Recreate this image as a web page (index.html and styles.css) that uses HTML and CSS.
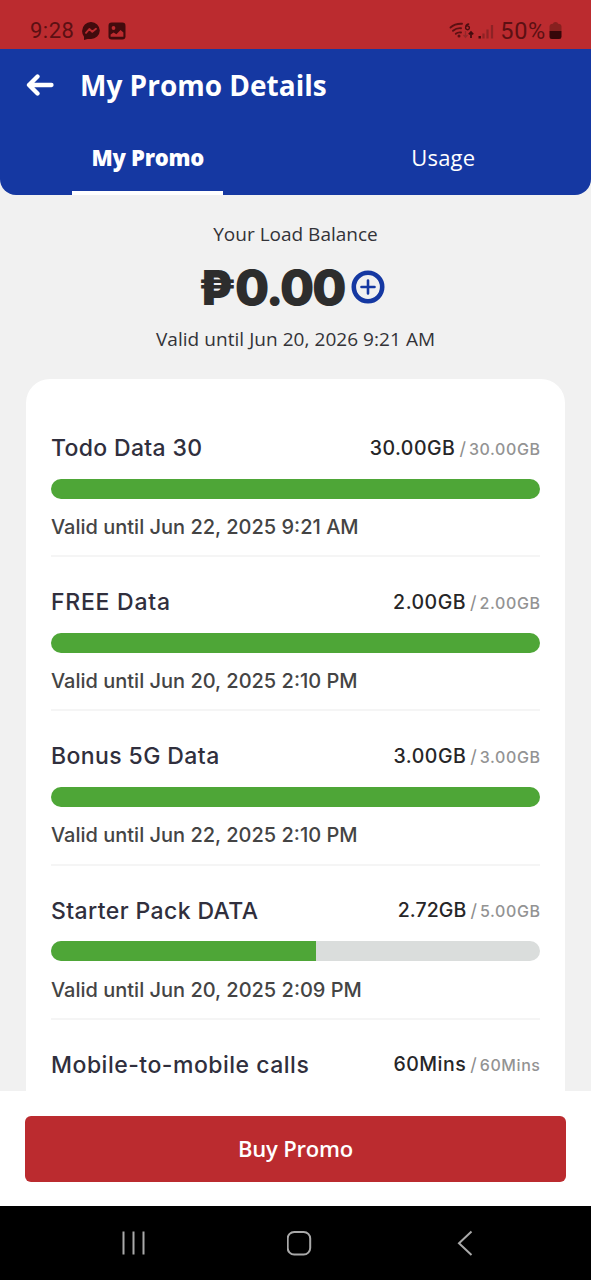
FILE: index.html
```html
<!DOCTYPE html>
<html lang="en">
<head>
<meta charset="utf-8">
<title>My Promo Details</title>
<link rel="stylesheet" href="styles.css">
</head>
<body>
<div class="screen">
  <div class="status">
    <span class="clock">9:28</span>
    <svg class="messenger" width="18" height="18" viewBox="0 0 18 18"><path d="M9 0a8.700 8.700 0 0 1 8.800 8.500A8.700 8.700 0 0 1 9 17H5.500L2 18v-3.300A8.300 8.300 0 0 1 .2 8.500 8.700 8.700 0 0 1 9 0z" fill="#420b0d"/><path d="M4 10.800 7.300 7l3 2.800L14 6.800" fill="none" stroke="#bb2b2f" stroke-width="1.900" stroke-linejoin="round" stroke-linecap="round"/></svg>
    <svg class="gallery" width="18" height="18" viewBox="0 0 18 18"><rect x=".5" y=".5" width="17" height="17" rx="3.200" fill="#420b0d"/><circle cx="5.500" cy="6" r="1.900" fill="#bb2b2f"/><path d="M2.600 14.800v-2.300l3-2 2.800 1.700 4.200-4.300 2.800 2.700v4.200z" fill="#bb2b2f"/></svg>
    <div class="signals">
      <svg width="46" height="20" viewBox="0 0 46 20"><g fill="none" stroke="#5c1013" stroke-width="1.900" stroke-linecap="round"><path d="M1.500 6.500Q6 2.500 13 2.800M4 9.800Q7.500 6.800 12 7.200M6.800 12.800Q9 11 12 11.500"/></g><circle cx="10" cy="15" r="1.500" fill="#5c1013"/><path d="M20.200 3q-3.600.2-3.600 3.700a1.900 1.900 0 1 0 1.900-1.800q-1.300 0-1.900 1.200" fill="none" stroke="#4b0d10" stroke-width="1.400"/><path d="M16.500 10v6M14.500 14l2 2.300 2-2.300" fill="none" stroke="#94272a" stroke-width="1.300"/><path d="M22 17v-5.500M19.800 13.400 22 11l2.200 2.400" fill="none" stroke="#420b0d" stroke-width="1.700"/><path d="M29.500 15h2.400v2.500h-2.400z" fill="#420b0d"/><path d="M34.500 12.500v5M38.500 8.500v9M43 4v13.500" stroke="#8d2225" stroke-width="2.200"/></svg>
      <span class="percent">50%</span>
      <svg class="battery" width="13" height="18" viewBox="0 0 13 18"><path d="M4 1.800Q4 0 6.500 0T9 1.800q3.500 0 3.500 3V9H.5V4.800q0-3 3.500-3z" fill="#87201f"/><path d="M.5 9h12v5.700q0 2.300-2.300 2.300H2.800Q.5 17 .5 14.700z" fill="#360709"/></svg>
    </div>
  </div>

  <header class="header">
    <div class="title-row">
      <svg class="back" width="28" height="22" viewBox="0 0 28 22"><path d="M25.500 11H3M11.500 2.500 3 11l8.500 8.500" fill="none" stroke="#fff" stroke-width="4.300" stroke-linecap="round" stroke-linejoin="round"/></svg>
      <h1 class="title">My Promo Details</h1>
    </div>
    <nav class="tabs">
      <div class="tab"><span class="tab-label active">My Promo</span></div>
      <div class="tab"><span class="tab-label">Usage</span></div>
    </nav>
  </header>

  <section class="balance">
    <div class="balance-label">Your Load Balance</div>
    <div class="amount-row">
      <span class="peso">₱</span><span class="amount">0.00</span>
      <svg class="plus" width="34" height="34" viewBox="0 0 34 34"><circle cx="17" cy="17" r="14.200" fill="none" stroke="#1538a2" stroke-width="4.600"/><path d="M17 10.500v13M10.500 17h13" stroke="#1538a2" stroke-width="2.600" stroke-linecap="round"/></svg>
    </div>
    <div class="balance-valid">Valid until Jun 20, 2026 9:21 AM</div>
  </section>

  <main class="card">
    <article class="promo">
      <div class="promo-head"><h2 class="name n1">Todo Data 30</h2><div class="quota"><span class="left">30.00GB</span><span class="slash">/</span><span class="total">30.00GB</span></div></div>
      <div class="bar"><div class="fill" style="width:100%"></div></div>
      <div class="valid">Valid until Jun 22, 2025 9:21 AM</div>
    </article>
    <article class="promo">
      <div class="promo-head"><h2 class="name n2">FREE Data</h2><div class="quota"><span class="left">2.00GB</span><span class="slash">/</span><span class="total">2.00GB</span></div></div>
      <div class="bar"><div class="fill" style="width:100%"></div></div>
      <div class="valid">Valid until Jun 20, 2025 2:10 PM</div>
    </article>
    <article class="promo">
      <div class="promo-head"><h2 class="name n3">Bonus 5G Data</h2><div class="quota"><span class="left">3.00GB</span><span class="slash">/</span><span class="total">3.00GB</span></div></div>
      <div class="bar"><div class="fill" style="width:100%"></div></div>
      <div class="valid">Valid until Jun 22, 2025 2:10 PM</div>
    </article>
    <article class="promo">
      <div class="promo-head"><h2 class="name n4">Starter Pack DATA</h2><div class="quota"><span class="left narrow">2.72GB</span><span class="slash">/</span><span class="total">5.00GB</span></div></div>
      <div class="bar"><div class="fill" style="width:54.1%"></div></div>
      <div class="valid">Valid until Jun 20, 2025 2:09 PM</div>
    </article>
    <article class="promo">
      <div class="promo-head"><h2 class="name n5">Mobile-to-mobile calls</h2><div class="quota"><span class="left">60Mins</span><span class="slash">/</span><span class="total">60Mins</span></div></div>
    </article>
  </main>

  <footer class="action"><div class="buy"><span class="buy-label">Buy Promo</span></div></footer>

  <div class="navbar">
    <svg width="26" height="26" viewBox="0 0 26 26"><path d="M2.500 1.500v23M12.500 1.500v23M22.500 1.500v23" stroke="#a9a9a9" stroke-width="2"/></svg>
    <svg width="26" height="26" viewBox="0 0 26 26"><rect x=".7" y="2" width="22.500" height="22.500" rx="6.500" fill="none" stroke="#a9a9a9" stroke-width="2"/></svg>
    <svg width="26" height="26" viewBox="0 0 26 26"><path d="M19.500 1.500 7 13.200 19.500 25" fill="none" stroke="#a9a9a9" stroke-width="2"/></svg>
  </div>
</div>
</body>
</html>
```
FILE: styles.css
```css
* { box-sizing: border-box; }
body { margin: 0; font-family: Inter, "Noto Sans", sans-serif; }
h1, h2 { margin: 0; font-weight: inherit; }
svg { display: block; flex: none; }
.screen { width: 591px; height: 1280px; display: flex; flex-direction: column; overflow: hidden; background: #f1f1f1; white-space: nowrap; }

.status { height: 49px; flex: none; background: #bb2b2f; color: #5c1013; display: flex; align-items: center; padding: 13px 29px 0 30px; }
.clock { font: 400 22px/30px Roboto, sans-serif; letter-spacing: .5px; width: 52px; }
.gallery { margin-left: 8px; }
.signals { margin-left: auto; display: flex; align-items: center; }
.percent { font: 400 23.500px/30px Roboto, sans-serif; letter-spacing: .7px; margin-left: 5px; }
.battery { margin-left: 3px; }

.header { height: 146px; flex: none; background: #1538a2; color: #fff; border-radius: 0 0 16px 16px; font-family: "Open Sans", sans-serif; display: flex; flex-direction: column; }
.title-row { height: 71px; display: flex; align-items: center; padding-left: 26px; }
.title { font-size: 28px; line-height: 40px; font-weight: 700; margin-left: 26px; }
.tabs { height: 75px; display: flex; }
.tab { flex: 1; display: flex; justify-content: center; }
.tab-label { font-size: 22px; font-weight: 500; line-height: 74px; width: 151px; text-align: center; height: 75px; letter-spacing: .2px; }
.active { font-weight: 800; letter-spacing: -.25px; border-bottom: 4px solid #fff; }

.balance { height: 184px; flex: none; display: flex; flex-direction: column; align-items: center; padding-top: 24px; font-family: "Open Sans", sans-serif; color: #333338; }
.balance-label { font-size: 19px; line-height: 30px; }
.amount-row { display: flex; align-items: center; height: 76px; padding-right: 7px; color: #2d2d2d; font: 900 48px/62px Inter, sans-serif; }
.peso, .amount { padding-top: 1px; }
.amount { letter-spacing: -2px; }
.plus { margin-left: 7px; }
.balance-valid { font-size: 19px; line-height: 28px; letter-spacing: .05px; }

.card { flex: 1; min-height: 0; overflow: hidden; margin: 0 26px; padding: 24px 25px 0; background: #fff; border-radius: 24px 24px 0 0; }
.promo { height: 154.200px; border-bottom: 2px solid #f5f5f5; display: flex; flex-direction: column; padding-top: 26px; }
.promo-head { display: flex; justify-content: space-between; align-items: center; height: 38px; }
.name { font-size: 23px; font-weight: 500; color: #302f3d; }
.n1 { letter-spacing: .33px; }
.n2 { letter-spacing: .75px; }
.n3 { letter-spacing: .4px; }
.n4 { letter-spacing: .4px; }
.n5 { letter-spacing: .5px; }
.quota { display: flex; align-items: baseline; position: relative; top: -.5px; }
.left { font-size: 19.500px; font-weight: 500; color: #262628; letter-spacing: .5px; }
.narrow { letter-spacing: .1px; }
.slash { font-size: 18px; color: #8c8c8c; margin: 0 3px 0 4px; }
.total { font-size: 16px; font-weight: 500; color: #939393; letter-spacing: .6px; margin-right: -.6px; }
.bar { height: 20px; margin-top: 11.500px; border-radius: 10px; background: #dadddc; overflow: hidden; flex: none; }
.fill { height: 100%; background: #4ea637; }
.valid { font-size: 20px; line-height: 30px; margin-top: 13.500px; font-weight: 500; color: #444; }

.action { height: 115px; flex: none; background: #fff; padding: 25px 25px 0; }
.buy { height: 66px; border-radius: 6px; background: #bb2b2f; color: #fff; display: flex; align-items: center; justify-content: center; padding-bottom: 2px; font: 600 22px/30px "Open Sans", sans-serif; letter-spacing: -.2px; }
.navbar { height: 74px; flex: none; background: #000; display: flex; justify-content: space-between; align-items: center; padding: 0 113px 0 121px; }
```
